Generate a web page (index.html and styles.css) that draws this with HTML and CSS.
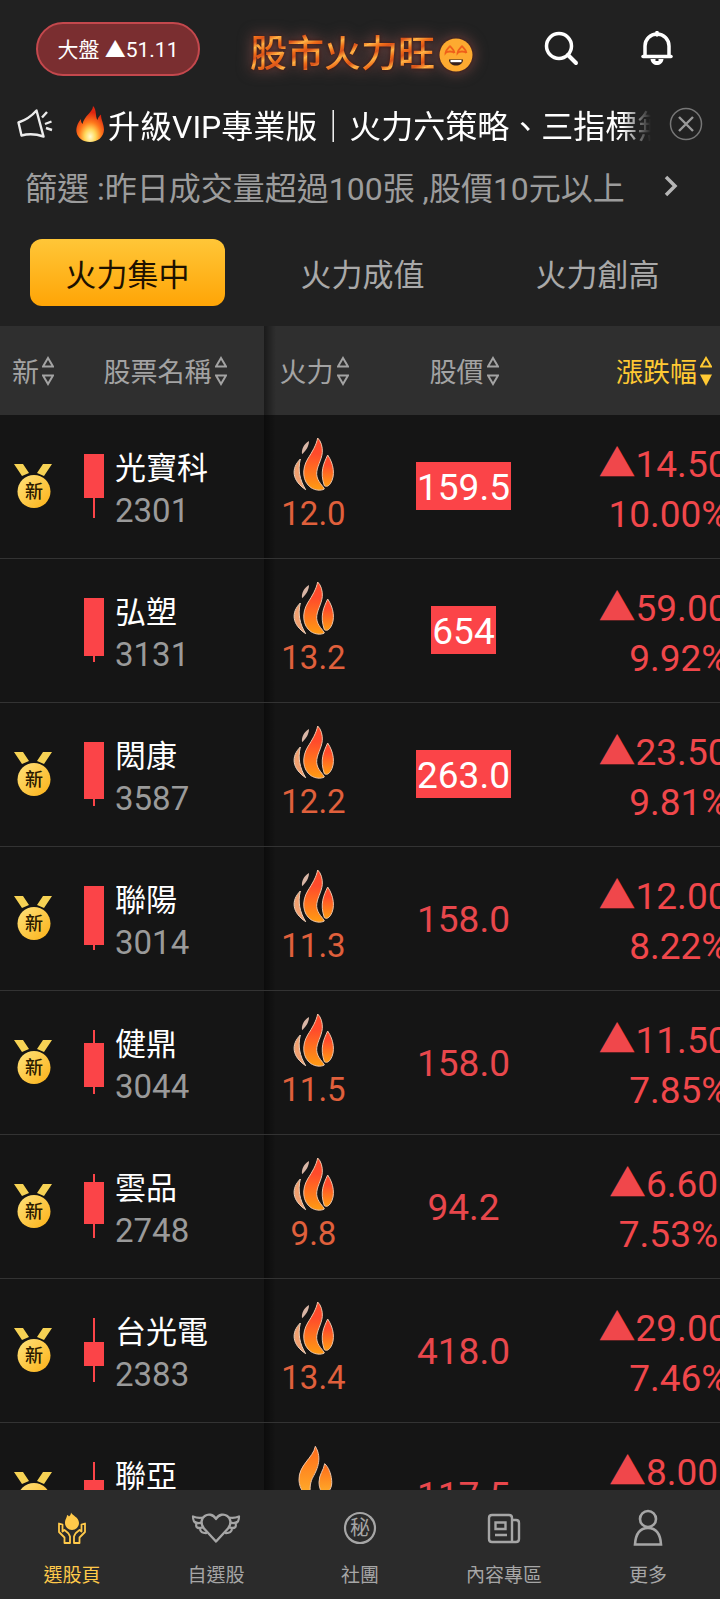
FILE: index.html
```html
<!DOCTYPE html>
<html lang="zh-Hant">
<head>
    <meta charset="UTF-8">
    <meta name="viewport" content="width=device-width, initial-scale=1.0">
    <title>股市火力旺</title>
    <link rel="stylesheet" href="styles.css">
</head>
<body>
    <svg class="sprite" width="0" height="0" aria-hidden="true">
        <defs>
            <linearGradient id="fireGrad" x1="0" y1="0" x2="0" y2="1">
                <stop offset="0.3" stop-color="#ff4b2b"/>
                <stop offset="1" stop-color="#ff9c12"/>
            </linearGradient>
            <linearGradient id="warmGrad" x1="0" y1="0" x2="0" y2="1">
                <stop offset="0" stop-color="#ff6a1a"/>
                <stop offset="1" stop-color="#ffb02a"/>
            </linearGradient>
            <linearGradient id="goldGrad" x1="0" y1="0" x2="1" y2="1">
                <stop offset="0" stop-color="#ffe27c"/>
                <stop offset="1" stop-color="#fbb116"/>
            </linearGradient>
            <radialGradient id="emberGrad" cx="0.5" cy="0.85" r="0.8">
                <stop offset="0" stop-color="#fffbd0"/>
                <stop offset="0.25" stop-color="#ffd75a"/>
                <stop offset="0.5" stop-color="#ff7a1c"/>
                <stop offset="0.85" stop-color="#dc2410"/>
            </radialGradient>
        </defs>
        <symbol id="flame" viewBox="0 0 126 162">
            <path d="M48 12C32 22 25 36 27 52C38 42 48 28 48 12Z" fill="#d9b6a6"/>
            <path d="M22 66C-6 94-4 130 38 158C20 128 14 100 22 66Z" fill="#f0a070" stroke="#ecd0ba" stroke-width="3"/>
            <path d="M74 3C70 24 58 44 44 66C26 96 28 134 54 152C66 160 84 162 94 156C92 148 72 134 71 112C70 90 86 70 88 46C89 30 84 12 74 3Z" fill="url(#fireGrad)" stroke="#eec4a8" stroke-width="3"/>
            <path d="M104 54C92 80 80 104 94 146C100 150 106 148 112 140C128 116 122 80 104 54Z" fill="url(#fireGrad)" stroke="#eec4a8" stroke-width="3"/>
        </symbol>
        <symbol id="flame-warm" viewBox="0 0 126 162">
            <path d="M67 4C60 40 16 60 18 106C20 134 34 150 54 156C50 134 50 118 58 100C70 78 90 42 67 4Z" fill="url(#warmGrad)" stroke="#eec4a8" stroke-width="3"/>
            <path d="M95 56C92 76 78 88 78 112C78 128 84 140 92 150C110 142 118 126 116 106C114 84 106 66 95 56Z" fill="url(#warmGrad)" stroke="#eec4a8" stroke-width="3"/>
        </symbol>
        <symbol id="medal" viewBox="0 0 38 44">
            <path d="M0 0h9l6 9-7 3zM38 0h-9l-6 9 7 3z" fill="#f6d254"/>
            <circle cx="20" cy="27.5" r="16.5" fill="url(#goldGrad)"/>
            <text class="medal-text" x="20" y="34" text-anchor="middle">新</text>
        </symbol>
        <symbol id="sort" viewBox="0 0 12 30">
            <path d="M6 2L11 10.5H1ZM6 28L1 19.5H11Z" fill="none" stroke="currentColor" stroke-width="2"/>
        </symbol>
        <symbol id="sort-desc" viewBox="0 0 12 30">
            <path d="M6 2L11 10.5H1Z" fill="none" stroke="currentColor" stroke-width="2"/>
            <path d="M6 30L0 18.5H12Z" fill="currentColor"/>
        </symbol>
    </svg>

    <header class="top">
        <div class="title-bar">
            <button type="button" class="market">大盤 ▲51.11</button>
            <h1 class="logo">
                <span class="logo-text">股市火力旺</span>
                <svg class="logo-face" viewBox="0 0 34 34" aria-hidden="true">
                    <circle cx="17" cy="17" r="16.5" fill="#fdaa30"/>
                    <path d="M11 7.500c0 2 4.500 4 4.500 7.500M11 7.500c0 2-4.500 4-4.500 7.500 1.500-2 7.500-2 9 0M23 7.500c0 2 4.500 4 4.500 7.500M23 7.500c0 2-4.500 4-4.500 7.500 1.500-2 7.500-2 9 0" fill="none" stroke="#ef5f1a" stroke-width="1.800"/>
                    <path d="M10 21.500h14c0 8-14 8-14 0z" fill="#35201c"/>
                    <path d="M11.500 22h11v2.200h-11z" fill="#fff"/>
                </svg>
            </h1>
            <button type="button" class="icon-btn" aria-label="搜尋">
                <svg viewBox="0 0 36 36"><circle cx="15" cy="15" r="12.500" fill="none" stroke="#fff" stroke-width="3.500"/><path d="M24 24L32 32" stroke="#fff" stroke-width="4" stroke-linecap="round"/></svg>
            </button>
            <button type="button" class="icon-btn" aria-label="通知">
                <svg viewBox="0 0 36 36"><path d="M5 25V15a12 12 0 0 1 24 0V25" fill="none" stroke="#fff" stroke-width="3.500"/><path d="M3 25.500H31" stroke="#fff" stroke-width="3.500" stroke-linecap="round"/><path d="M17 1.500V4" stroke="#fff" stroke-width="3.500" stroke-linecap="round"/><path d="M10.500 28c1 8 12 8 13 0H18.500v2H15.500V28z" fill="#fff"/></svg>
            </button>
        </div>

        <div class="notice">
            <svg class="horn" viewBox="0 0 36 30" aria-hidden="true"><path d="M1.500 13.500Q12 10 19.500 1.500L26.500 27.500Q15 23.500 4.500 26.500Z" fill="none" stroke="#ececec" stroke-width="2.400" stroke-linejoin="round"/><path d="M25 8.500L30 3M28 15L34.500 12.500M29 19L35 21" stroke="#ececec" stroke-width="2.400"/></svg>
            <p class="notice-text">
                <svg class="ember" viewBox="0 0 28 36" aria-hidden="true"><path d="M17 0C17 6 8 10 6.500 18C5 16.500 5 15 5 13C1 18 0 22 .5 26C1.500 32 7 36 14 36C22 36 27.500 31 28 24C28 18 25 14 25 8.500C23 10 22 12 21.500 14C19 10 21 4 17 0Z" fill="url(#emberGrad)"/></svg>
                <span>升級VIP專業版｜火力六策略、三指標無</span>
            </p>
            <button type="button" class="close-btn" aria-label="關閉">
                <svg viewBox="0 0 34 34"><circle cx="17" cy="17" r="15.500" fill="none" stroke="#777" stroke-width="1.500"/><path d="M10 10L24 24M24 10L10 24" stroke="#999" stroke-width="2.400"/></svg>
            </button>
        </div>

        <button type="button" class="filter">
            <span>篩選 :昨日成交量超過100張 ,股價10元以上</span>
            <svg class="chevron" viewBox="0 0 14 22" aria-hidden="true"><path d="M2 2L11 11L2 20" fill="none" stroke="#b5b5b5" stroke-width="3.500"/></svg>
        </button>

        <nav class="tabs">
            <button type="button" class="tab active">火力集中</button>
            <button type="button" class="tab">火力成值</button>
            <button type="button" class="tab">火力創高</button>
        </nav>
    </header>

    <main class="list">
        <table class="stocks">
            <colgroup>
                <col class="col-new">
                <col class="col-name">
                <col class="col-fire">
                <col class="col-price">
                <col class="col-change">
            </colgroup>
            <thead>
                <tr>
                    <th><button type="button" class="sort">新<svg><use href="#sort"/></svg></button></th>
                    <th><button type="button" class="sort">股票名稱<svg><use href="#sort"/></svg></button></th>
                    <th class="edge"><button type="button" class="sort">火力<svg><use href="#sort"/></svg></button></th>
                    <th><button type="button" class="sort">股價<svg><use href="#sort"/></svg></button></th>
                    <th><button type="button" class="sort sorted">漲跌幅<svg><use href="#sort-desc"/></svg></button></th>
                </tr>
            </thead>
            <tbody>
                <tr>
                    <td><svg class="medal"><use href="#medal"/></svg></td>
                    <td><div class="stock"><svg class="candle"><rect x="9" y="0" width="2" height="64"/><rect x="0" y="0" width="20" height="44"/></svg><div class="label"><div class="name">光寶科</div><div class="code">2301</div></div></div></td>
                    <td class="edge"><div class="fire"><svg><use href="#flame"/></svg>12.0</div></td>
                    <td><span class="price limit">159.5</span></td>
                    <td><div class="change">▲14.50<br>10.00%</div></td>
                </tr>
                <tr>
                    <td></td>
                    <td><div class="stock"><svg class="candle"><rect x="9" y="0" width="2" height="64"/><rect x="0" y="0" width="20" height="58"/></svg><div class="label"><div class="name">弘塑</div><div class="code">3131</div></div></div></td>
                    <td class="edge"><div class="fire"><svg><use href="#flame"/></svg>13.2</div></td>
                    <td><span class="price limit">654</span></td>
                    <td><div class="change">▲59.00<br>9.92%</div></td>
                </tr>
                <tr>
                    <td><svg class="medal"><use href="#medal"/></svg></td>
                    <td><div class="stock"><svg class="candle"><rect x="9" y="0" width="2" height="64"/><rect x="0" y="0" width="20" height="57"/></svg><div class="label"><div class="name">閎康</div><div class="code">3587</div></div></div></td>
                    <td class="edge"><div class="fire"><svg><use href="#flame"/></svg>12.2</div></td>
                    <td><span class="price limit">263.0</span></td>
                    <td><div class="change">▲23.50<br>9.81%</div></td>
                </tr>
                <tr>
                    <td><svg class="medal"><use href="#medal"/></svg></td>
                    <td><div class="stock"><svg class="candle"><rect x="9" y="0" width="2" height="64"/><rect x="0" y="0" width="20" height="59"/></svg><div class="label"><div class="name">聯陽</div><div class="code">3014</div></div></div></td>
                    <td class="edge"><div class="fire"><svg><use href="#flame"/></svg>11.3</div></td>
                    <td><span class="price">158.0</span></td>
                    <td><div class="change">▲12.00<br>8.22%</div></td>
                </tr>
                <tr>
                    <td><svg class="medal"><use href="#medal"/></svg></td>
                    <td><div class="stock"><svg class="candle"><rect x="9" y="0" width="2" height="64"/><rect x="0" y="13" width="20" height="44"/></svg><div class="label"><div class="name">健鼎</div><div class="code">3044</div></div></div></td>
                    <td class="edge"><div class="fire"><svg><use href="#flame"/></svg>11.5</div></td>
                    <td><span class="price">158.0</span></td>
                    <td><div class="change">▲11.50<br>7.85%</div></td>
                </tr>
                <tr>
                    <td><svg class="medal"><use href="#medal"/></svg></td>
                    <td><div class="stock"><svg class="candle"><rect x="9" y="0" width="2" height="64"/><rect x="0" y="8" width="20" height="42"/></svg><div class="label"><div class="name">雲品</div><div class="code">2748</div></div></div></td>
                    <td class="edge"><div class="fire"><svg><use href="#flame"/></svg>9.8</div></td>
                    <td><span class="price">94.2</span></td>
                    <td><div class="change">▲6.60<br>7.53%</div></td>
                </tr>
                <tr>
                    <td><svg class="medal"><use href="#medal"/></svg></td>
                    <td><div class="stock"><svg class="candle"><rect x="9" y="0" width="2" height="64"/><rect x="0" y="24" width="20" height="24"/></svg><div class="label"><div class="name">台光電</div><div class="code">2383</div></div></div></td>
                    <td class="edge"><div class="fire"><svg><use href="#flame"/></svg>13.4</div></td>
                    <td><span class="price">418.0</span></td>
                    <td><div class="change">▲29.00<br>7.46%</div></td>
                </tr>
                <tr>
                    <td><svg class="medal"><use href="#medal"/></svg></td>
                    <td><div class="stock"><svg class="candle"><rect x="9" y="0" width="2" height="64"/><rect x="0" y="18" width="20" height="32"/></svg><div class="label"><div class="name">聯亞</div></div></div></td>
                    <td class="edge"><div class="fire"><svg><use href="#flame-warm"/></svg></div></td>
                    <td><span class="price">117.5</span></td>
                    <td><div class="change">▲8.00</div></td>
                </tr>
            </tbody>
        </table>
    </main>

    <nav class="bottom-nav">
        <a href="#" class="nav-item current">
            <svg class="nav-icon" viewBox="0 0 52 40"><path d="M25 4.500c1 3 8 4.500 8 10.500a7 7 0 0 1-14 0c0-4 2-5 2-8 1 0 1.500 1 2 1.500 1-1 2-2 2-4z" fill="currentColor"/><path d="M13 15.500V24L18.500 29.500V35H24V28.500Q23 25 18.500 22L16.500 23.500V16.500ZM39 15.500V24L33.500 29.500V35H28V28.500Q29 25 33.500 22L35.500 23.500V16.500Z" fill="none" stroke="currentColor" stroke-width="1.800" stroke-linejoin="round"/></svg>
            <span>選股頁</span>
        </a>
        <a href="#" class="nav-item">
            <svg class="nav-icon" viewBox="0 0 52 40"><path d="M26 33.500L14 20.500C6 10 20 1 26 11C32 1 46 10 38 20.500Z" fill="none" stroke="currentColor" stroke-width="2.400" stroke-linejoin="round"/><path d="M13 9.500Q8 10.500 3 8.500Q3 14 6.500 15.500Q5 20 10 20.500Q10 25.500 17 25M4 13.500Q8 16 11.500 14.500M8 19.500Q11 20.500 13.500 19M39 9.500Q44 10.500 49 8.500Q49 14 45.500 15.500Q47 20 42 20.500Q42 25.500 35 25M48 13.500Q44 16 40.500 14.500M44 19.500Q41 20.500 38.500 19" fill="none" stroke="currentColor" stroke-width="2.200" stroke-linejoin="round"/></svg>
            <span>自選股</span>
        </a>
        <a href="#" class="nav-item">
            <svg class="nav-icon" viewBox="0 0 52 40"><circle cx="26" cy="20" r="15" fill="none" stroke="currentColor" stroke-width="2.200"/><text class="secret-text" x="26" y="27" text-anchor="middle">秘</text></svg>
            <span>社團</span>
        </a>
        <a href="#" class="nav-item">
            <svg class="nav-icon" viewBox="0 0 52 40"><path d="M34 34H14Q11 34 11 31V10Q11 7 14 7H31Q34 7 34 10ZM34 12H38Q41 12 41 15V31Q41 34 38 34H34M17.500 14.500H27.500V21H17.500ZM17 27H29" fill="none" stroke="currentColor" stroke-width="2.400"/></svg>
            <span>內容專區</span>
        </a>
        <a href="#" class="nav-item">
            <svg class="nav-icon" viewBox="0 0 52 40"><circle cx="26" cy="11" r="8" fill="none" stroke="currentColor" stroke-width="2.600"/><path d="M13 36.500Q14 20 26 20T39 36.500Z" fill="none" stroke="currentColor" stroke-width="2.600"/></svg>
            <span>更多</span>
        </a>
    </nav>
</body>
</html>
```
FILE: styles.css
```css
* {
    box-sizing: border-box;
}
body {
    margin: 0;
    height: 100vh;
    display: flex;
    flex-direction: column;
    overflow: hidden;
    background-color: #212121;
    color: #fff;
    font-family: Roboto, "Noto Sans CJK TC", sans-serif;
}
button {
    padding: 0;
    border: none;
    background: none;
    color: inherit;
    font: inherit;
    cursor: pointer;
}
svg {
    display: block;
}
.sprite {
    position: absolute;
}

/* header */
.top {
    flex: none;
    padding-top: 16px;
}
.title-bar {
    display: flex;
    align-items: center;
    height: 66px;
    padding: 0 32px 0 36px;
}
.market {
    width: 164px;
    height: 54px;
    padding-bottom: 2px;
    border: 2px solid #c4484d;
    border-radius: 27px;
    background-color: #7a2e30;
    font-size: 21px;
    white-space: nowrap;
}
.logo {
    display: flex;
    align-items: center;
    gap: 4px;
    margin: 0 auto 0 50px;
    padding-top: 12px;
    font-size: 37px;
    font-weight: 500;
    line-height: 44px;
    filter: drop-shadow(0 0 2px #3a1410) drop-shadow(0 0 7px #7a4a48);
}
.logo-text {
    background: repeating-linear-gradient(155deg, #ffb84a 0, #ef6c18 6px, #d9521a 10px, #ffa63a 15px);
    -webkit-background-clip: text;
    background-clip: text;
    color: transparent;
    white-space: nowrap;
}
.logo-face {
    width: 34px;
    height: 34px;
}
.icon-btn {
    width: 60px;
    height: 60px;
    margin-left: 36px;
}
.icon-btn svg {
    width: 36px;
    height: 36px;
    margin: 0 auto;
}
.notice {
    display: flex;
    align-items: center;
    height: 84px;
    padding: 0 17px;
}
.horn {
    flex: none;
    width: 36px;
    height: 30px;
}
.notice-text {
    flex: 1;
    display: flex;
    align-items: center;
    gap: 4px;
    margin: 0 18px 0 23px;
    overflow: hidden;
    white-space: nowrap;
    font-size: 32px;
    line-height: 44px;
    -webkit-mask-image: linear-gradient(to right, #000 95%, transparent);
    mask-image: linear-gradient(to right, #000 95%, transparent);
}
.notice-text span {
    padding-top: 6px;
}
.ember {
    flex: none;
    width: 28px;
    height: 36px;
}
.close-btn svg {
    width: 34px;
    height: 34px;
}
.filter {
    display: flex;
    align-items: center;
    justify-content: space-between;
    width: 100%;
    height: 40px;
    padding: 0 42px 0 25px;
    color: #9c9c9c;
    font-size: 32px;
    white-space: nowrap;
}
.chevron {
    width: 14px;
    height: 22px;
}
.tabs {
    display: grid;
    grid-template-columns: repeat(3, 1fr);
    padding: 33px 5px 20px 10px;
}
.tab {
    height: 67px;
    margin: 0 20px;
    border-radius: 12px;
    color: #a9a9a9;
    font-size: 31px;
    white-space: nowrap;
}
.tab.active {
    background: linear-gradient(#ffc638, #ffa506);
    color: #1d1100;
}

/* stock table */
.list {
    flex: 1;
    min-height: 0;
    overflow: auto;
    scrollbar-width: none;
    background-color: #151515;
}
.stocks {
    width: 764px;
    min-width: 100%;
    table-layout: fixed;
    border-spacing: 0;
}
.col-new {
    width: 66px;
}
.col-name {
    width: 198px;
}
.col-fire {
    width: 100px;
}
.col-price, .col-change {
    width: 200px;
}
th {
    height: 89px;
    padding: 0;
    background-color: #2f2f2f;
    font-weight: normal;
}
td {
    height: 144px;
    padding: 0 1px 2px 0;
    border-bottom: 1px solid #333;
    text-align: center;
}
.edge {
    background-image: linear-gradient(to right, rgba(0, 0, 0, 0.45), transparent 12px);
}
.sort {
    display: flex;
    align-items: center;
    gap: 3px;
    margin: 0 auto;
    color: #a3a3a3;
    font-size: 27px;
    white-space: nowrap;
}
.sort svg {
    width: 12px;
    height: 30px;
}
.sorted {
    color: #ffc933;
}
.medal {
    width: 38px;
    height: 44px;
    margin: 0 auto;
}
.medal-text {
    font-size: 18px;
    font-weight: 500;
    fill: #2a1a00;
}
.stock {
    display: flex;
    align-items: center;
    gap: 11px;
    height: 92px;
    padding-left: 18px;
    text-align: left;
    line-height: 42px;
}
.label {
    height: 92px;
    padding-top: 8px;
}
.candle {
    width: 20px;
    height: 64px;
    fill: #fb4448;
}
.name {
    font-size: 31px;
}
.code {
    color: #9a9a9a;
    font-size: 33px;
}
.fire {
    height: 98px;
    color: #e0603c;
    font-size: 33px;
    line-height: 46px;
}
.fire svg {
    width: 42px;
    height: 54px;
    margin: 0 auto;
}
.price {
    display: inline-block;
    padding-top: 4px;
    color: #e8474c;
    font-size: 37px;
    line-height: 44px;
}
.limit {
    padding: 4px 1px 0;
    background-color: #fb4448;
    color: #fff;
}
.change {
    display: inline-block;
    height: 108px;
    padding-top: 8px;
    color: #f0474b;
    font-size: 37px;
    line-height: 50px;
    text-align: right;
}

/* bottom navigation */
.bottom-nav {
    flex: none;
    display: grid;
    grid-template-columns: repeat(5, 1fr);
    height: 109px;
    padding-top: 18px;
    background-color: #2b2b2b;
}
.nav-item {
    display: flex;
    flex-direction: column;
    align-items: center;
    gap: 15px;
    color: #a6a6a6;
    font-size: 19px;
    line-height: 26px;
    text-decoration: none;
}
.nav-icon {
    width: 52px;
    height: 40px;
}
.secret-text {
    font-size: 20px;
    fill: currentColor;
}
.current {
    color: #ffc94a;
}
```
